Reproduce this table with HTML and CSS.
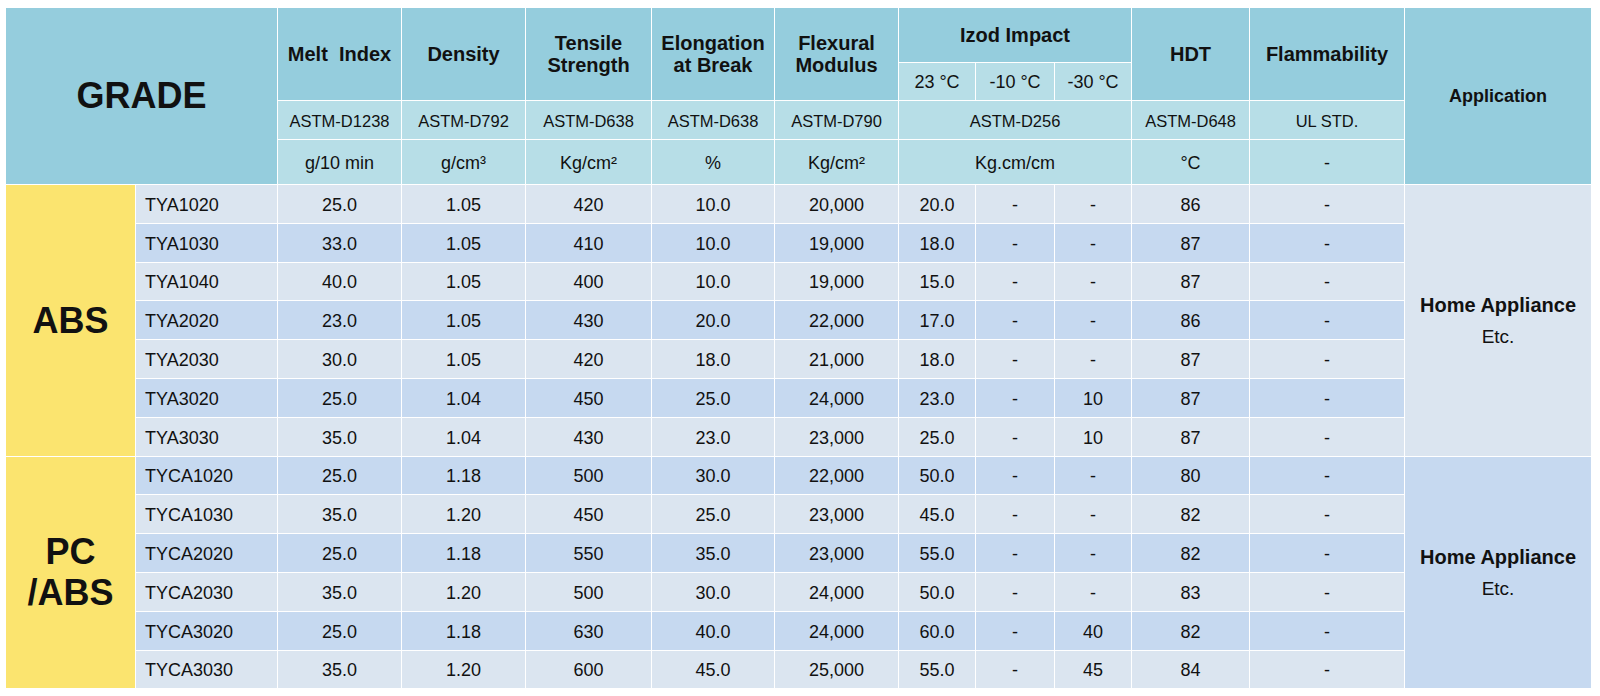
FILE: index.html
```html
<!DOCTYPE html>
<html lang="en">
<head>
<meta charset="utf-8">
<title>Grade Table</title>
<link rel="stylesheet" href="styles.css">
</head>
<body>
<table class="spec">
  <colgroup>
    <col class="c-fam"><col class="c-grade"><col class="c-melt"><col class="c-dens"><col class="c-tens"><col class="c-elon"><col class="c-flex"><col class="c-iz1"><col class="c-iz2"><col class="c-iz3"><col class="c-hdt"><col class="c-flam"><col class="c-app">
  </colgroup>
  <thead>
    <tr class="h-top">
      <th class="hd grade-title" colspan="2" rowspan="4">GRADE</th>
      <th class="hd" rowspan="2">Melt&nbsp; Index</th>
      <th class="hd" rowspan="2">Density</th>
      <th class="hd two" rowspan="2">Tensile<br>Strength</th>
      <th class="hd two" rowspan="2">Elongation<br>at Break</th>
      <th class="hd two" rowspan="2">Flexural<br>Modulus</th>
      <th class="hd izod" colspan="3">Izod Impact</th>
      <th class="hd" rowspan="2">HDT</th>
      <th class="hd" rowspan="2">Flammability</th>
      <th class="hd app-title" rowspan="4">Application</th>
    </tr>
    <tr class="h-sub">
      <td class="lt temp">23 °C</td>
      <td class="lt temp">-10 °C</td>
      <td class="lt temp">-30 °C</td>
    </tr>
    <tr class="h-astm">
      <td class="lt astm">ASTM-D1238</td>
      <td class="lt astm">ASTM-D792</td>
      <td class="lt astm">ASTM-D638</td>
      <td class="lt astm">ASTM-D638</td>
      <td class="lt astm">ASTM-D790</td>
      <td class="lt astm" colspan="3">ASTM-D256</td>
      <td class="lt astm">ASTM-D648</td>
      <td class="lt astm">UL STD.</td>
    </tr>
    <tr class="h-unit">
      <td class="lt unit">g/10 min</td>
      <td class="lt unit">g/cm³</td>
      <td class="lt unit">Kg/cm²</td>
      <td class="lt unit">%</td>
      <td class="lt unit">Kg/cm²</td>
      <td class="lt unit" colspan="3">Kg.cm/cm</td>
      <td class="lt unit">°C</td>
      <td class="lt unit">-</td>
    </tr>
  </thead>
  <tbody>
    <tr class="row odd">
      <th class="family" rowspan="7">ABS</th>
      <td class="name">TYA1020</td><td>25.0</td><td>1.05</td><td>420</td><td>10.0</td><td>20,000</td><td>20.0</td><td>-</td><td>-</td><td>86</td><td>-</td>
      <td class="app app-abs" rowspan="7"><span class="app-main">Home Appliance</span><span class="app-sub">Etc.</span></td>
    </tr>
    <tr class="row even">
      <td class="name">TYA1030</td><td>33.0</td><td>1.05</td><td>410</td><td>10.0</td><td>19,000</td><td>18.0</td><td>-</td><td>-</td><td>87</td><td>-</td>
    </tr>
    <tr class="row odd">
      <td class="name">TYA1040</td><td>40.0</td><td>1.05</td><td>400</td><td>10.0</td><td>19,000</td><td>15.0</td><td>-</td><td>-</td><td>87</td><td>-</td>
    </tr>
    <tr class="row even">
      <td class="name">TYA2020</td><td>23.0</td><td>1.05</td><td>430</td><td>20.0</td><td>22,000</td><td>17.0</td><td>-</td><td>-</td><td>86</td><td>-</td>
    </tr>
    <tr class="row odd">
      <td class="name">TYA2030</td><td>30.0</td><td>1.05</td><td>420</td><td>18.0</td><td>21,000</td><td>18.0</td><td>-</td><td>-</td><td>87</td><td>-</td>
    </tr>
    <tr class="row even">
      <td class="name">TYA3020</td><td>25.0</td><td>1.04</td><td>450</td><td>25.0</td><td>24,000</td><td>23.0</td><td>-</td><td>10</td><td>87</td><td>-</td>
    </tr>
    <tr class="row odd">
      <td class="name">TYA3030</td><td>35.0</td><td>1.04</td><td>430</td><td>23.0</td><td>23,000</td><td>25.0</td><td>-</td><td>10</td><td>87</td><td>-</td>
    </tr>
    <tr class="row even">
      <th class="family" rowspan="6">PC<br>/ABS</th>
      <td class="name">TYCA1020</td><td>25.0</td><td>1.18</td><td>500</td><td>30.0</td><td>22,000</td><td>50.0</td><td>-</td><td>-</td><td>80</td><td>-</td>
      <td class="app app-pc" rowspan="6"><span class="app-main">Home Appliance</span><span class="app-sub">Etc.</span></td>
    </tr>
    <tr class="row odd">
      <td class="name">TYCA1030</td><td>35.0</td><td>1.20</td><td>450</td><td>25.0</td><td>23,000</td><td>45.0</td><td>-</td><td>-</td><td>82</td><td>-</td>
    </tr>
    <tr class="row even">
      <td class="name">TYCA2020</td><td>25.0</td><td>1.18</td><td>550</td><td>35.0</td><td>23,000</td><td>55.0</td><td>-</td><td>-</td><td>82</td><td>-</td>
    </tr>
    <tr class="row odd">
      <td class="name">TYCA2030</td><td>35.0</td><td>1.20</td><td>500</td><td>30.0</td><td>24,000</td><td>50.0</td><td>-</td><td>-</td><td>83</td><td>-</td>
    </tr>
    <tr class="row even">
      <td class="name">TYCA3020</td><td>25.0</td><td>1.18</td><td>630</td><td>40.0</td><td>24,000</td><td>60.0</td><td>-</td><td>40</td><td>82</td><td>-</td>
    </tr>
    <tr class="row odd">
      <td class="name">TYCA3030</td><td>35.0</td><td>1.20</td><td>600</td><td>45.0</td><td>25,000</td><td>55.0</td><td>-</td><td>45</td><td>84</td><td>-</td>
    </tr>
  </tbody>
</table>
</body>
</html>
```

FILE: styles.css
```css
html, body {
  margin: 0;
  padding: 0;
  background: #ffffff;
}

body {
  font-family: "Liberation Sans", Arial, sans-serif;
  color: #111111;
}

.spec {
  margin: 7px 0 0 5px;
  border-collapse: separate;
  border-spacing: 1px;
  table-layout: fixed;
  width: 1587px;
  background: #ffffff;
}

.c-fam { width: 129px; }
.c-grade { width: 141px; }
.c-melt { width: 123px; }
.c-dens { width: 123px; }
.c-tens { width: 125px; }
.c-elon { width: 122px; }
.c-flex { width: 123px; }
.c-iz1 { width: 76px; }
.c-iz2 { width: 78px; }
.c-iz3 { width: 76px; }
.c-hdt { width: 117px; }
.c-flam { width: 154px; }
.c-app { width: 186px; }

.spec th,
.spec td {
  padding: 0;
  text-align: center;
  vertical-align: middle;
  white-space: nowrap;
  overflow: hidden;
}

/* header */
.hd {
  background: #95cddd;
  font-weight: bold;
  font-size: 20px;
  line-height: 22px;
}

.grade-title {
  font-size: 36px;
  line-height: 40px;
}

.app-title {
  font-size: 18px;
}

.lt {
  background: #b7dee7;
  font-weight: normal;
}

.spec .lt {
  padding-top: 2px;
}

.h-top { height: 54px; }
.h-sub { height: 37px; }
.h-astm { height: 38px; }
.h-unit { height: 44px; }

.temp { font-size: 18px; }
.astm { font-size: 16.5px; }
.unit { font-size: 18px; }

/* body */
.row { height: 37.8px; }

.row td {
  font-size: 18px;
  line-height: 20px;
  padding-top: 2px;
}

.row.odd td { background: #dbe5f0; }
.row.even td { background: #c6d9f0; }

.row td.name {
  text-align: left;
  padding-left: 9px;
}

.family {
  background: #fbe46f;
  font-weight: bold;
  font-size: 36px;
  line-height: 41px;
}

.row td.app-abs { background: #dbe5f0; }
.row td.app-pc { background: #c6d9f0; }

.app-main,
.app-sub {
  display: block;
  line-height: 32px;
}

.app-main {
  font-weight: bold;
  font-size: 20px;
}

.app-sub {
  font-size: 19px;
}
```
